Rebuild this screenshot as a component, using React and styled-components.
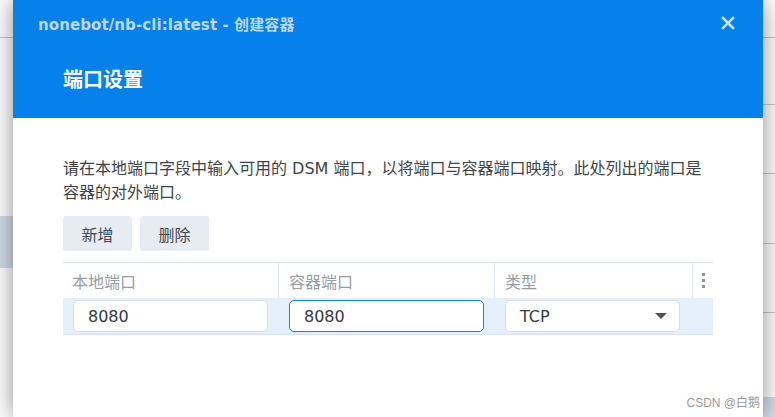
import React from 'react'
import styled, { createGlobalStyle } from 'styled-components'

const GlobalStyle = createGlobalStyle`
  html, body {
    margin: 0;
    padding: 0;
    background: #ffffff;
  }
  body {
    font-family: "DejaVu Sans", "Noto Sans CJK SC", sans-serif;
    overflow: hidden;
  }
`

const Screen = styled.div`
  display: grid;
  grid-template-columns: 13px 750px 12px;
  height: 417px;
  position: relative;
  overflow: hidden;
`

const PageStrip = styled.div`
  display: flex;
  flex-direction: column;
  background: #ffffff;
`

const StripCell = styled.div`
  height: ${({ h }) => h}px;
  flex: ${({ h }) => (h ? 'none' : '1')};
  background: ${({ band }) => (band ? '#d3dde8' : '#ffffff')};
  border-bottom: ${({ line }) => (line ? '1px solid #c4c9ce' : 'none')};
`

const Dialog = styled.div`
  position: relative;
  z-index: 1;
  display: flex;
  flex-direction: column;
  background: #ffffff;
  box-shadow: 0 0 22px rgba(0, 0, 0, 0.45);
`

const Header = styled.div`
  height: 118px;
  box-sizing: border-box;
  background: #0680ea;
  padding: 0 28px 0 25px;
  display: flex;
  flex-direction: column;
`

const TopBar = styled.div`
  height: 46px;
  display: flex;
  align-items: center;
  justify-content: space-between;
`

const WindowTitle = styled.div`
  font-size: 15px;
  font-weight: bold;
  color: #b9d8f6;
  letter-spacing: 0.1px;
`

const CloseButton = styled.div`
  width: 14px;
  height: 14px;
  display: flex;
  cursor: pointer;
`

const PageTitle = styled.div`
  margin: 22px 0 0 25px;
  font-size: 20px;
  font-weight: bold;
  color: #ffffff;
  line-height: 24px;
`

const Body = styled.div`
  padding: 39px 50px 0 50px;
  display: flex;
  flex-direction: column;
`

const Description = styled.p`
  margin: 0;
  font-size: 16px;
  line-height: 24px;
  color: #3d434a;
`

const Toolbar = styled.div`
  display: flex;
  gap: 8px;
  margin-top: 11px;
`

const ToolButton = styled.div`
  width: 69px;
  height: 35px;
  border-radius: 3px;
  background: #e7ecf3;
  color: #414850;
  font-size: 16px;
  display: flex;
  align-items: center;
  justify-content: center;
  cursor: pointer;
`

const Table = styled.div`
  margin-top: 11px;
  border-top: 1px solid #d9e1ea;
  border-bottom: 1px solid #d9e1ea;
`

const Row = styled.div`
  display: grid;
  grid-template-columns: 215px 216px 198px 21px;
  height: ${({ head }) => (head ? 35 : 36)}px;
  background: ${({ selected }) => (selected ? '#e4effb' : '#ffffff')};
`

const HeadCell = styled.div`
  border-left: ${({ first }) => (first ? 'none' : '1px solid #e1e7ee')};
  padding-left: ${({ first }) => (first ? 9 : 10)}px;
  display: flex;
  align-items: center;
  font-size: 16px;
  color: #959ca4;
`

const Cell = styled.div`
  padding: 2px ${({ right }) => right}px 0 ${({ left }) => left}px;
  display: flex;
  align-items: flex-start;
`

const Field = styled.div`
  flex: 1;
  height: 32px;
  box-sizing: border-box;
  border: 1px solid ${({ focused }) => (focused ? '#1a7fe3' : '#d5dee8')};
  border-radius: 5px;
  background: #ffffff;
  padding: 0 14px;
  display: flex;
  align-items: center;
  justify-content: space-between;
  font-size: 16px;
  color: #343a40;
`

const Caret = styled.div`
  width: 0;
  height: 0;
  border-left: 6px solid transparent;
  border-right: 6px solid transparent;
  border-top: 6px solid #4b525a;
  margin-right: -2px;
`

const Kebab = styled.div`
  display: flex;
  flex-direction: column;
  align-items: center;
  justify-content: center;
  gap: 3px;
  border-left: 1px solid #e1e7ee;
`

const Dot = styled.span`
  width: 3px;
  height: 3px;
  background: #8d949b;
`

const Watermark = styled.div`
  position: absolute;
  right: 15px;
  bottom: 7px;
  z-index: 2;
  font-family: "Liberation Sans", "Noto Sans CJK SC", sans-serif;
  font-size: 12px;
  color: #9a9a9a;
`

const CloseIcon = () => (
  <svg width='14' height='14' viewBox='0 0 14 14'>
    <path d='M2 2 L12 12 M12 2 L2 12' stroke='#c4def7' strokeWidth='2.6' strokeLinecap='square' />
  </svg>
)

export default function App () {
  return (
    <>
      <GlobalStyle />
      <Screen>
        <PageStrip>
          <StripCell h={37} line />
          <StripCell h={178} />
          <StripCell h={52} band />
          <StripCell />
        </PageStrip>
        <Dialog>
          <Header>
            <TopBar>
              <WindowTitle>nonebot/nb-cli:latest - 创建容器</WindowTitle>
              <CloseButton><CloseIcon /></CloseButton>
            </TopBar>
            <PageTitle>端口设置</PageTitle>
          </Header>
          <Body>
            <Description>
              请在本地端口字段中输入可用的 DSM 端口，以将端口与容器端口映射。此处列出的端口是容器的对外端口。
            </Description>
            <Toolbar>
              <ToolButton>新增</ToolButton>
              <ToolButton>删除</ToolButton>
            </Toolbar>
            <Table>
              <Row head>
                <HeadCell first>本地端口</HeadCell>
                <HeadCell>容器端口</HeadCell>
                <HeadCell>类型</HeadCell>
                <Kebab><Dot /><Dot /><Dot /></Kebab>
              </Row>
              <Row selected>
                <Cell left={10} right={10}><Field>8080</Field></Cell>
                <Cell left={11} right={10}><Field focused>8080</Field></Cell>
                <Cell left={11} right={12}><Field>TCP<Caret /></Field></Cell>
                <Cell left={0} right={0} />
              </Row>
            </Table>
          </Body>
        </Dialog>
        <PageStrip>
          <StripCell h={37} line />
          <StripCell h={66} line />
          <StripCell h={68} line />
          <StripCell h={69} line />
          <StripCell h={68} line />
          <StripCell h={84} />
          <StripCell band />
        </PageStrip>
        <Watermark>CSDN @白鹅</Watermark>
      </Screen>
    </>
  )
}
